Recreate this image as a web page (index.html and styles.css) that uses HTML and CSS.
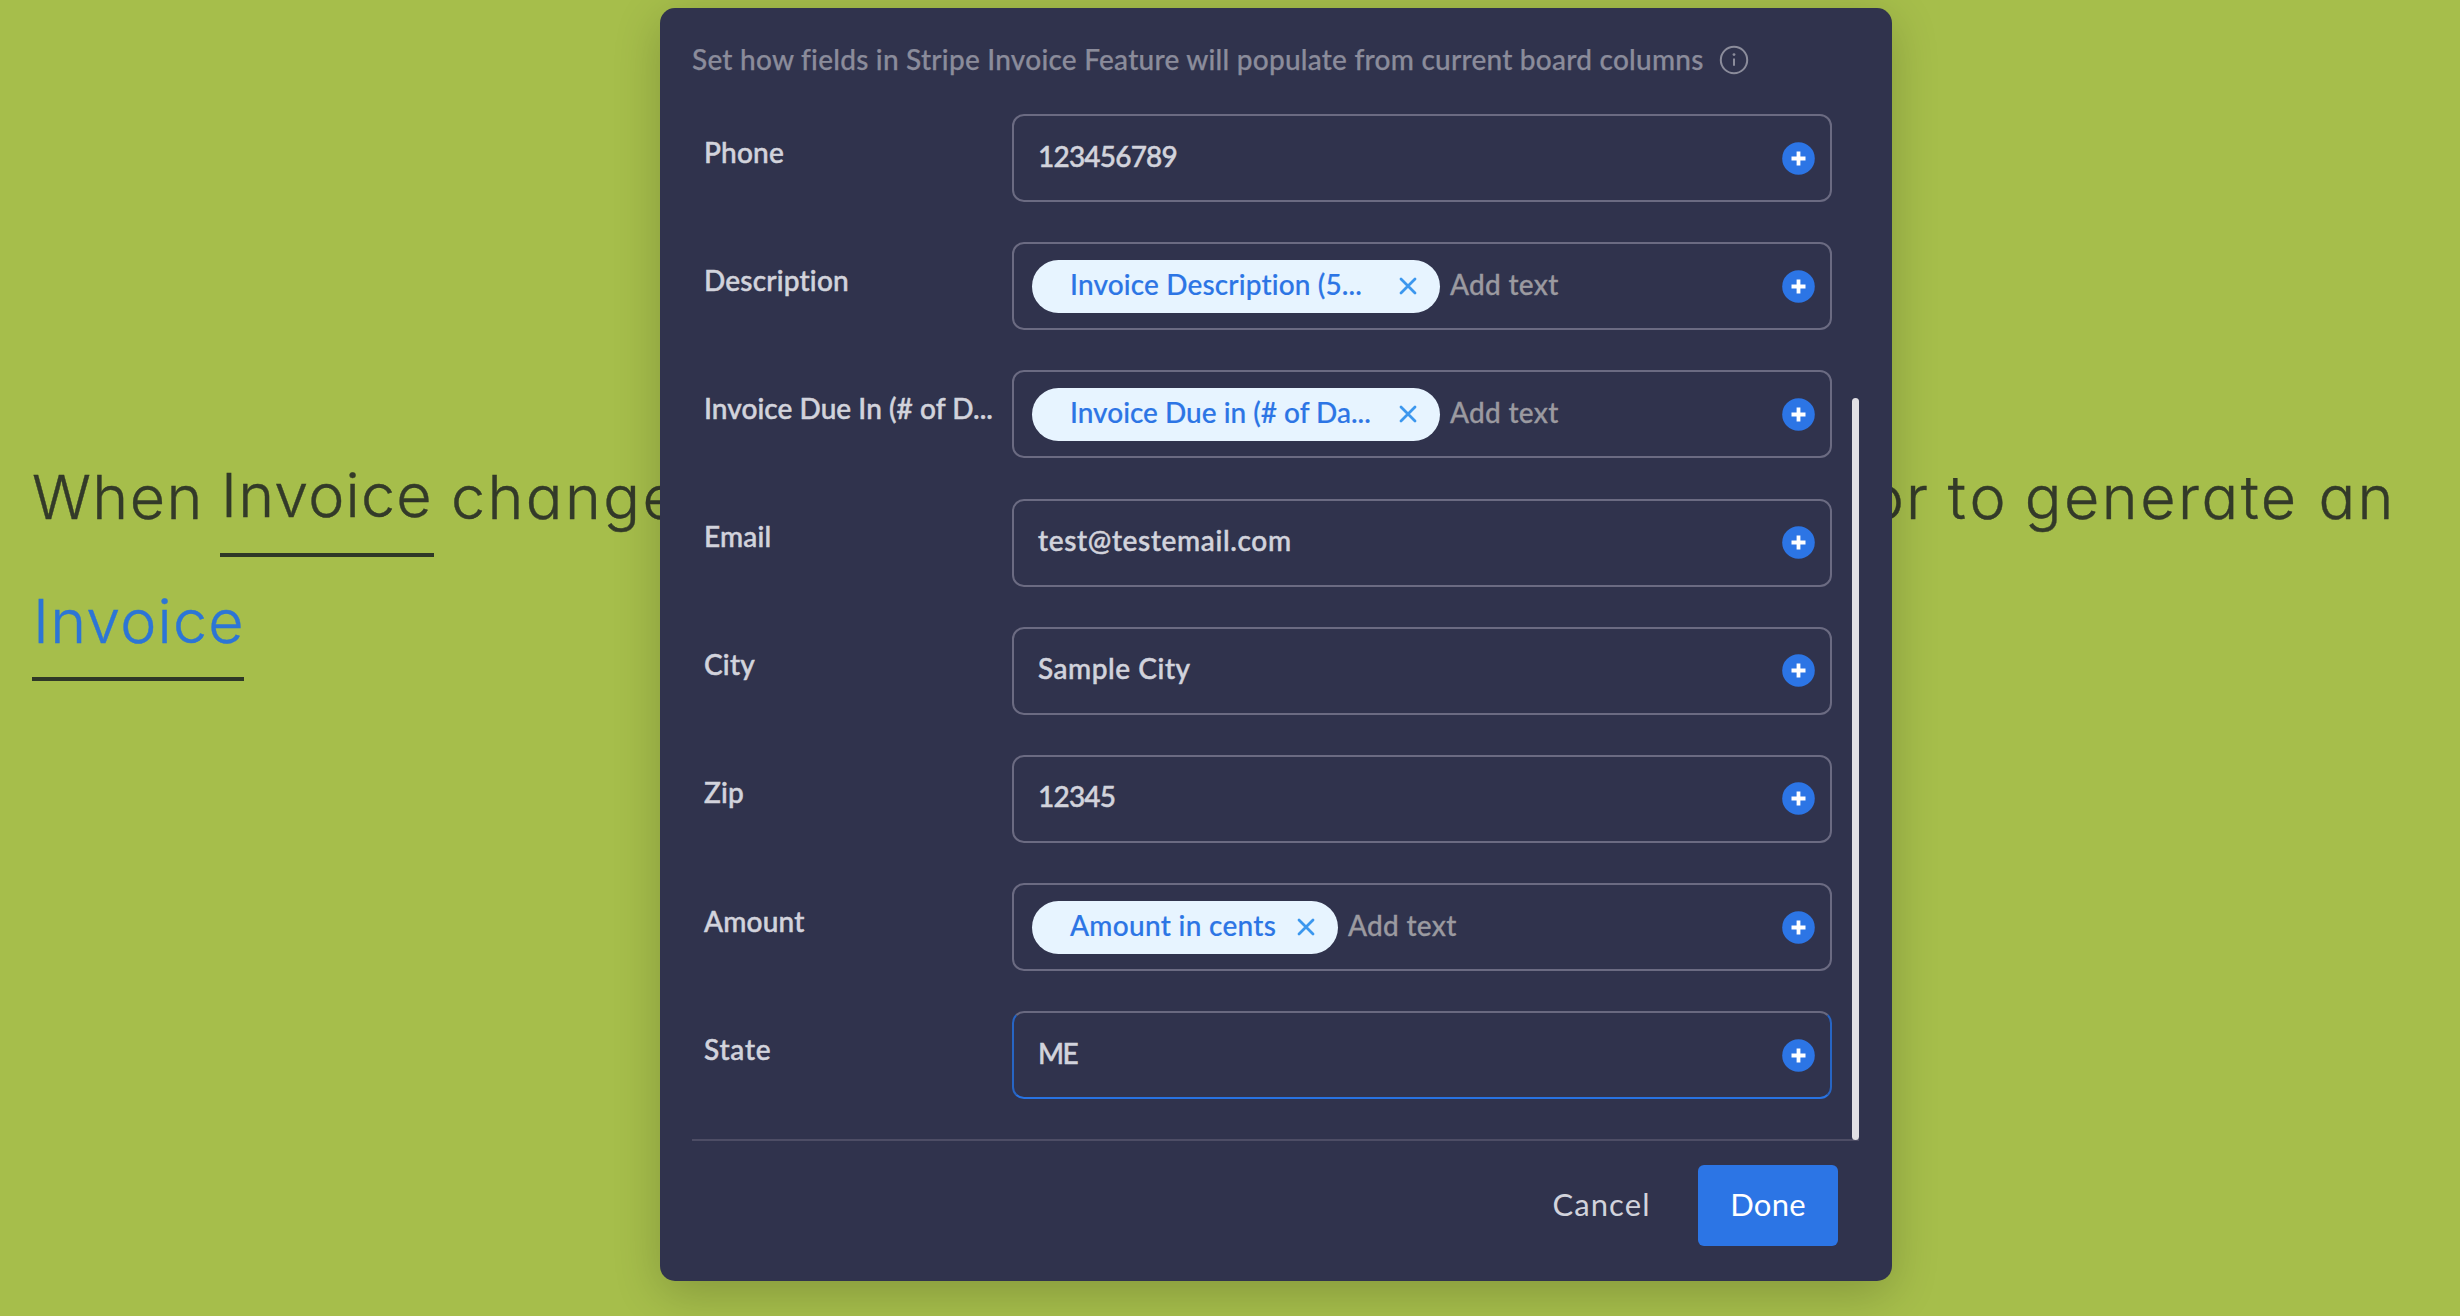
FILE: index.html
```html
<!DOCTYPE html>
<html lang="en">
<head>
<meta charset="utf-8">
<title>Invoice field mapping</title>
<link rel="stylesheet" href="styles.css">
</head>
<body>
<svg class="defs" width="0" height="0" aria-hidden="true">
  <symbol id="plus" viewBox="0 0 33 33"><circle cx="16.5" cy="16.5" r="16.3" fill="#2c75e5"/><path d="M16.5 9.5v14M9.5 16.5h14" stroke="#fff" stroke-width="3.8"/></symbol>
  <symbol id="close" viewBox="0 0 18 18"><path d="M2 2l14 14M16 2L2 16" stroke="#3c97ee" stroke-width="2.8" stroke-linecap="round"/></symbol>
</svg>

<main class="recipe">
  <div class="line">
    <div class="words"><span class="when">When</span><span class="token">Invoice</span><span class="change">change</span></div>
    <div class="words"><span class="or">or</span><span class="to">to</span><span class="generate">generate an</span></div>
  </div>
  <div class="line second"><span class="token link">Invoice</span></div>
</main>

<section class="modal">
  <header class="title">
    <span>Set how fields in Stripe Invoice Feature will populate from current board columns</span>
    <svg class="info" viewBox="0 0 30 30"><circle cx="15" cy="15" r="13.2" fill="none" stroke="#8b8c9b" stroke-width="2"/><path d="M15 13.6v7.2" stroke="#8b8c9b" stroke-width="2"/><circle cx="15" cy="9.6" r="1.4" fill="#8b8c9b"/></svg>
  </header>
  <div class="scroller">
    <div class="rows">
      <div class="row"><label>Phone</label><div class="field"><span class="value digits">123456789</span><svg class="plus"><use href="#plus"/></svg></div></div>
      <div class="row"><label>Description</label><div class="field"><div class="chip wide"><span class="chip-text">Invoice Description (5...</span><svg class="close"><use href="#close"/></svg></div><span class="hint">Add text</span><svg class="plus"><use href="#plus"/></svg></div></div>
      <div class="row"><label class="long">Invoice Due In (# of D...</label><div class="field"><div class="chip wide"><span class="chip-text tight">Invoice Due in (# of Da...</span><svg class="close"><use href="#close"/></svg></div><span class="hint">Add text</span><svg class="plus"><use href="#plus"/></svg></div></div>
      <div class="row"><label>Email</label><div class="field"><span class="value mail">test@testemail.com</span><svg class="plus"><use href="#plus"/></svg></div></div>
      <div class="row"><label>City</label><div class="field"><span class="value">Sample City</span><svg class="plus"><use href="#plus"/></svg></div></div>
      <div class="row"><label>Zip</label><div class="field"><span class="value digits">12345</span><svg class="plus"><use href="#plus"/></svg></div></div>
      <div class="row"><label>Amount</label><div class="field"><div class="chip"><span class="chip-text loose">Amount in cents</span><svg class="close"><use href="#close"/></svg></div><span class="hint">Add text</span><svg class="plus"><use href="#plus"/></svg></div></div>
      <div class="row"><label class="wider">State</label><div class="field active"><span class="value state">ME</span><svg class="plus"><use href="#plus"/></svg></div></div>
    </div>
    <div class="thumb"></div>
  </div>
  <footer class="actions"><button class="cancel">Cancel</button><button class="done">Done</button></footer>
</section>
</body>
</html>
```
FILE: styles.css
```css
* { box-sizing: border-box; }

body {
  margin: 0;
  width: 2460px;
  height: 1316px;
  overflow: hidden;
  position: relative;
  background: #a6be4b;
  font-family: Lato, "Open Sans", sans-serif;
  font-variant-ligatures: none;
}

.defs { position: absolute; }

/* Sentence behind the dialog */
.recipe {
  padding: 459px 64px 0 32px;
  font: 300 61px/76px Inter, sans-serif;
  font-feature-settings: "cv11";
  letter-spacing: 1.2px;
  color: #333a29;
  -webkit-text-stroke: .4px currentColor;
}

.line { display: flex; justify-content: space-between; height: 124px; }
.words { display: flex; align-items: flex-start; white-space: nowrap; }
.when { width: 188px; letter-spacing: 1.4px; }
.token {
  width: 214px;
  height: 100px;
  margin-top: -2px;
  padding-left: 1px;
  border-bottom: 4px solid #2f3827;
}
.change { padding-left: 17px; letter-spacing: 2.4px; }
.link { width: 212px; margin-top: 0; height: 98px; color: #2c75d6; }
.or { letter-spacing: 2px; }
.to { padding-left: 18px; letter-spacing: 4px; }
.generate { padding-left: 15px; letter-spacing: 2.5px; }

/* Dialog */
.modal {
  position: absolute;
  left: 660px;
  top: 8px;
  width: 1232px;
  height: 1273px;
  padding: 34px 32px 0;
  border-radius: 15px;
  background: #30334d;
  box-shadow: 0 12px 48px rgba(0, 0, 0, .2);
  color: #d2d3dc;
  font-size: 28px;
  font-weight: 500;
  line-height: 34px;
  white-space: nowrap;
  -webkit-text-stroke: .5px currentColor;
}

.title {
  display: flex;
  gap: 15px;
  height: 72px;
  color: #8b8c9b;
  letter-spacing: .24px;
  -webkit-text-stroke-width: .25px;
}
.info { width: 30px; height: 30px; margin-top: 3px; }

.scroller {
  display: flex;
  height: 1027px;
  border-bottom: 2px solid #4d4d65;
  margin-right: 1px;
}
.rows { display: flex; flex-direction: column; gap: 40.1px; width: 1140px; }
.row { display: flex; height: 88.1px; flex: none; }
.row label { width: 320px; padding: 20.5px 0 0 12px; letter-spacing: .2px; }
.row .long { letter-spacing: .06px; }
.row .wider { letter-spacing: .8px; }

.field {
  display: flex;
  align-items: center;
  width: 820px;
  padding: 0 15px 0 18px;
  border: 2px solid #6b6b82;
  border-radius: 12px;
}
.active { border-color: #696980 #2765c4 #2873e2; }

.value { padding: 0 0 5px 6px; letter-spacing: .55px; }
.digits { letter-spacing: -.8px; }
.mail { letter-spacing: .65px; }
.state { letter-spacing: -1.5px; }

.chip {
  display: flex;
  align-items: center;
  justify-content: space-between;
  width: 306px;
  height: 53px;
  padding: 0 23px 0 38px;
  border-radius: 27px;
  background: #e7f4ff;
  color: #2c75e5;
  -webkit-text-stroke-width: .2px;
}
.chip.wide { width: 408px; }
.chip-text { padding-bottom: 5px; letter-spacing: .15px; }
.chip-text.tight { letter-spacing: 0; }
.chip-text.loose { letter-spacing: .3px; }
.close { width: 18px; height: 18px; }
.hint { padding: 0 0 5px 10px; color: #9b9aa0; letter-spacing: .3px; -webkit-text-stroke-width: .3px; }
.plus { width: 33px; height: 33px; margin-left: auto; }

.thumb {
  width: 8px;
  height: 742px;
  margin: 284px 0 0 20px;
  border-radius: 4px;
  background: #e0dfe4;
}

.actions {
  display: flex;
  justify-content: flex-end;
  gap: 23px;
  padding: 24px 22px 0 0;
}
.actions button {
  height: 81px;
  padding: 0 0 4px;
  border: 0;
  border-radius: 6px;
  background: none;
  color: #d2d3dc;
  font: 400 31px/38px Lato, sans-serif;
  letter-spacing: 1.1px;
  -webkit-text-stroke-width: 0;
}
.actions .cancel { width: 147px; }
.actions .done { width: 140px; background: #2c75e5; color: #fff; letter-spacing: .2px; }
```
